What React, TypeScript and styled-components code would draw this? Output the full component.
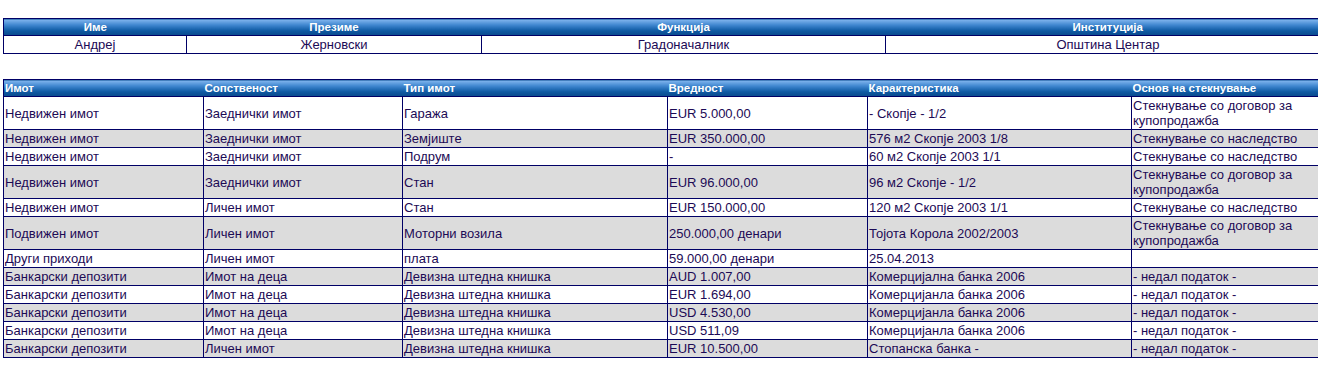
import React from "react";
import styled, { createGlobalStyle } from "styled-components";

const Global = createGlobalStyle`
  html, body { margin: 0; padding: 0; background: #ffffff; overflow: hidden; }
  body { font-family: "Liberation Sans", Arial, sans-serif; }
`;

const Page = styled.div`
  padding: 18px 0 0 3px;
  display: flex;
  flex-direction: column;
  gap: 25px;
  width: 1340px;
`;

const Table = styled.table<{ $width: number }>`
  border-collapse: collapse;
  table-layout: fixed;
  width: ${(p) => p.$width}px;
  border: 1px solid #000066;
`;

const HeadCell = styled.th<{ $align?: string }>`
  background: linear-gradient(to bottom, #82b6ee 0%, #3f86cf 35%, #0e5aa3 70%, #0a4a8c 100%);
  color: #ffffff;
  font-weight: bold;
  font-size: 11.5px;
  line-height: 15px;
  height: 16px;
  padding: 0 1px;
  text-align: ${(p) => p.$align || "left"};
  border-bottom: 1px solid #000066;
  white-space: nowrap;
  overflow: hidden;
`;

const Row = styled.tr<{ $shade?: boolean }>`
  background: ${(p) => (p.$shade ? "#dcdcdc" : "#ffffff")};
`;

const Cell = styled.td<{ $align?: string }>`
  border: 1px solid #000066;
  color: #1c0a55;
  font-size: 13px;
  line-height: 15px;
  padding: 1px 1px 1px 1px;
  vertical-align: middle;
  text-align: ${(p) => p.$align || "left"};
`;

const person = ["Андреј", "Жерновски", "Градоначалник", "Општина Центар"];
const personHead = ["Име", "Презиме", "Функција", "Институција"];
const personCols = [183, 295, 404, 445];

const assetHead = ["Имот", "Сопственост", "Тип имот", "Вредност", "Карактеристика", "Основ на стекнување"];
const assetCols = [200, 199, 265, 200, 264, 200];

const assets: string[][] = [
  ["Недвижен имот", "Заеднички имот", "Гаража", "EUR 5.000,00", "- Скопје - 1/2", "Стекнување со договор за купопродажба"],
  ["Недвижен имот", "Заеднички имот", "Земјиште", "EUR 350.000,00", "576 м2 Скопје 2003 1/8", "Стекнување со наследство"],
  ["Недвижен имот", "Заеднички имот", "Подрум", "-", "60 м2 Скопје 2003 1/1", "Стекнување со наследство"],
  ["Недвижен имот", "Заеднички имот", "Стан", "EUR 96.000,00", "96 м2 Скопје - 1/2", "Стекнување со договор за купопродажба"],
  ["Недвижен имот", "Личен имот", "Стан", "EUR 150.000,00", "120 м2 Скопје 2003 1/1", "Стекнување со наследство"],
  ["Подвижен имот", "Личен имот", "Моторни возила", "250.000,00 денари", "Тојота Корола 2002/2003", "Стекнување со договор за купопродажба"],
  ["Други приходи", "Личен имот", "плата", "59.000,00 денари", "25.04.2013", ""],
  ["Банкарски депозити", "Имот на деца", "Девизна штедна книшка", "AUD 1.007,00", "Комерцијална банка 2006", "- недал податок -"],
  ["Банкарски депозити", "Имот на деца", "Девизна штедна книшка", "EUR 1.694,00", "Комерцијанла банка 2006", "- недал податок -"],
  ["Банкарски депозити", "Имот на деца", "Девизна штедна книшка", "USD 4.530,00", "Комерцијанла банка 2006", "- недал податок -"],
  ["Банкарски депозити", "Имот на деца", "Девизна штедна книшка", "USD 511,09", "Комерцијанла банка 2006", "- недал податок -"],
  ["Банкарски депозити", "Личен имот", "Девизна штедна книшка", "EUR 10.500,00", "Стопанска банка -", "- недал податок -"],
];

const sum = (a: number[]) => a.reduce((x, y) => x + y, 0);

export default function App() {
  return (
    <>
      <Global />
      <Page>
        <Table $width={sum(personCols)}>
          <colgroup>
            {personCols.map((w, i) => (
              <col key={i} style={{ width: w }} />
            ))}
          </colgroup>
          <thead>
            <tr>
              {personHead.map((h) => (
                <HeadCell key={h} $align="center">
                  {h}
                </HeadCell>
              ))}
            </tr>
          </thead>
          <tbody>
            <Row>
              {person.map((v) => (
                <Cell key={v} $align="center">
                  {v}
                </Cell>
              ))}
            </Row>
          </tbody>
        </Table>
        <Table $width={sum(assetCols)}>
          <colgroup>
            {assetCols.map((w, i) => (
              <col key={i} style={{ width: w }} />
            ))}
          </colgroup>
          <thead>
            <tr>
              {assetHead.map((h) => (
                <HeadCell key={h}>{h}</HeadCell>
              ))}
            </tr>
          </thead>
          <tbody>
            {assets.map((r, i) => (
              <Row key={i} $shade={i % 2 === 1}>
                {r.map((v, j) => (
                  <Cell key={j}>{v}</Cell>
                ))}
              </Row>
            ))}
          </tbody>
        </Table>
      </Page>
    </>
  );
}
